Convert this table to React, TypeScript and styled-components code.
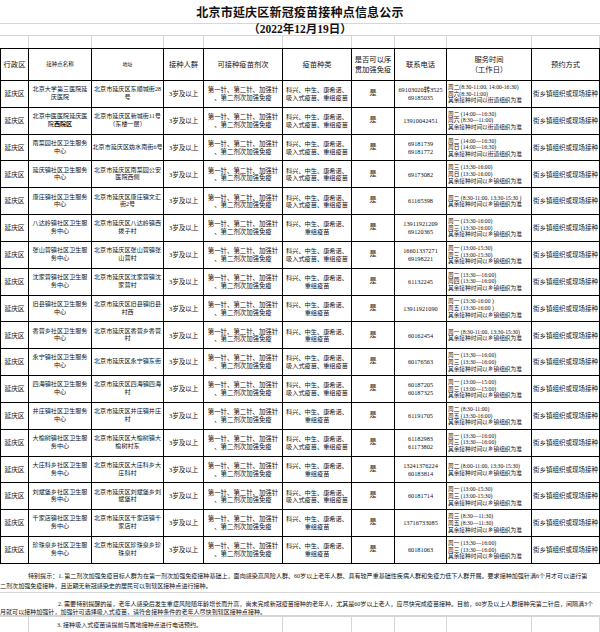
import React from "react";
import styled, { createGlobalStyle } from "styled-components";

const GlobalStyle = createGlobalStyle`
  html, body {
    margin: 0;
    padding: 0;
    background: #fff;
  }
  body {
    font-family: "Liberation Serif", "Noto Sans CJK SC", serif;
    color: #111;
  }
`;

const COLS = [29, 63, 72, 40, 79, 69, 43, 52, 85, 68];
const tableCols = COLS.map((w, i) => `${i === 0 ? w - 1 : w}px`).join(" ");
const plainCols = COLS.map((w) => `${w}px`).join(" ");

const GRID = "#d6d6d6";

const Page = styled.div`
  width: 600px;
  height: 632px;
  overflow: hidden;
  background: #fff;
`;

const TitleBar = styled.div`
  height: 23px;
  display: flex;
  align-items: center;
  justify-content: center;
  font-size: 12px;
  font-weight: 700;
  letter-spacing: 0.2px;
`;

const DateBar = styled.div`
  height: 11px;
  border-top: 1px solid ${GRID};
  display: flex;
  align-items: center;
  justify-content: center;
  font-size: 11.5px;
  font-weight: 700;
  line-height: 11px;
`;

const FaintRow = styled.div<{ $h: number }>`
  display: grid;
  grid-template-columns: ${plainCols};
  height: ${(p) => p.$h}px;
  border-top: 1px solid ${GRID};
  box-sizing: border-box;
`;

const FaintCell = styled.div<{ $span?: number; $pl?: number }>`
  border-right: 1px solid ${GRID};
  grid-column: span ${(p) => p.$span ?? 1};
  padding-left: ${(p) => p.$pl ?? 0}px;
  font-size: 6.05px;
  line-height: 10px;
  padding-top: 3px;
  white-space: nowrap;
  background: #fff;
`;

const Table = styled.div`
  display: grid;
  grid-template-columns: ${tableCols};
  grid-template-rows: 32px;
  grid-auto-rows: 26.83px;
  border-left: 1px solid #000;
  border-top: 1px solid #000;
`;

const Cell = styled.div<{ $left?: boolean; $size?: number; $lh?: number }>`
  border-right: 1px solid #000;
  border-bottom: 1px solid #000;
  display: flex;
  flex-direction: column;
  justify-content: center;
  align-items: ${(p) => (p.$left ? "flex-start" : "center")};
  text-align: ${(p) => (p.$left ? "left" : "center")};
  padding: 0 1px;
  font-size: ${(p) => p.$size ?? 6.2}px;
  line-height: ${(p) => p.$lh ?? 7.7}px;
  white-space: nowrap;
  overflow: hidden;
  min-width: 0;
`;

const Line = styled.span`
  display: block;
`;

const Strong = styled.b`
  font-weight: 700;
`;

const NoteBand = styled.div<{ $h: number; $pt: number; $lh: number }>`
  height: ${(p) => p.$h}px;
  box-sizing: border-box;
  padding-top: ${(p) => p.$pt}px;
  border-bottom: 1px solid ${GRID};
  font-size: 6.05px;
  line-height: ${(p) => p.$lh}px;
  overflow: hidden;
`;

const NoteLine = styled.div<{ $indent?: number }>`
  padding-left: ${(p) => p.$indent ?? 0}px;
  white-space: nowrap;
`;

type Row = {
  name: React.ReactNode[];
  addr: string[];
  inhaled: boolean;
  phone: string[];
  time: string[];
};

const JD = "其余接种时间以街道组织为准";
const XZ = "其余接种时间以乡镇组织为准";

const rows: Row[] = [
  {
    name: ["北京大学第三医院延", "庆医院"],
    addr: ["北京市延庆区东顺城街28", "号"],
    inhaled: true,
    phone: ["69103020转3525", "69185035"],
    time: ["周二(8:30-11:00, 14:00-16:30)", "周六(8:30-11:00)", JD],
  },
  {
    name: [
      "北京中医医院延庆医",
      <>
        院<Strong>西院区</Strong>
      </>,
    ],
    addr: ["北京市延庆区新城街11号", "（东楼一层）"],
    inhaled: true,
    phone: ["13910042451"],
    time: ["周二 (14:00—16:30)", "周六 (8:30—11:00)", JD],
  },
  {
    name: ["南菜园社区卫生服务", "中心"],
    addr: ["北京市延庆区妫水南街6号"],
    inhaled: true,
    phone: ["69181739", "69181772"],
    time: ["周二 (14:00—16:30)", "周日 (14:00—16:30)", JD],
  },
  {
    name: ["延庆镇社区卫生服务", "中心"],
    addr: ["北京市延庆区南菜园公安", "医院西侧"],
    inhaled: true,
    phone: ["69173082"],
    time: ["周三 (13:30-16:00)", "周日 (13:30-16:00)", XZ],
  },
  {
    name: ["康庄镇社区卫生服务", "中心"],
    addr: ["北京市延庆区康庄镇文汇", "街2号"],
    inhaled: true,
    phone: ["61165398"],
    time: ["周二 (8:30-11:00, 13:30-15:30 )", XZ],
  },
  {
    name: ["八达岭镇社区卫生服", "务中心"],
    addr: ["北京市延庆区八达岭镇西", "拨子村"],
    inhaled: false,
    phone: ["13911921209", "69120365"],
    time: ["周一 (13:30-16:00)", "周三 (13:30-16:00)", XZ],
  },
  {
    name: ["张山营镇社区卫生服", "务中心"],
    addr: ["北京市延庆区张山营镇张", "山营村"],
    inhaled: true,
    phone: ["16601337271", "69198221"],
    time: ["周一 (13:00-15:30)", "周三 (13:00-15:30)", XZ],
  },
  {
    name: ["沈家营镇社区卫生服", "务中心"],
    addr: ["北京市延庆区沈家营镇沈", "家营村"],
    inhaled: false,
    phone: ["61132245"],
    time: ["周二 (13:30—16:00)", "周四 (13:30—16:00)", XZ],
  },
  {
    name: ["旧县镇社区卫生服务", "中心"],
    addr: ["北京市延庆区旧县镇旧县", "村西"],
    inhaled: false,
    phone: ["13911921090"],
    time: ["周一 (13:30-16:00 )", "周五 (13:30-16:00 )", XZ],
  },
  {
    name: ["香营乡社区卫生服务", "中心"],
    addr: ["北京市延庆区香营乡香营", "村"],
    inhaled: false,
    phone: ["60162454"],
    time: ["周一 (8:30-11:00, 13:30-15:30)", XZ],
  },
  {
    name: ["永宁镇社区卫生服务", "中心"],
    addr: ["北京市延庆区永宁镇东街"],
    inhaled: true,
    phone: ["60176563"],
    time: ["周一 (13:30—16:00)", "周三 (13:30—16:00)", XZ],
  },
  {
    name: ["四海镇社区卫生服务", "中心"],
    addr: ["北京市延庆区四海镇四海", "村"],
    inhaled: true,
    phone: ["60187205", "60187325"],
    time: ["周一 (13:00—15:00)", "周三 (13:00—15:00)", XZ],
  },
  {
    name: ["井庄镇社区卫生服务", "中心"],
    addr: ["北京市延庆区井庄镇井庄", "村"],
    inhaled: false,
    phone: ["61191705"],
    time: ["周二 (8:30-11:00)", "周五 (13:30-16:00)", XZ],
  },
  {
    name: ["大榆树镇社区卫生服", "务中心"],
    addr: ["北京市延庆区大榆树镇大", "榆树村东"],
    inhaled: true,
    phone: ["61182983", "61173802"],
    time: ["周一 (13:30—16:00)", "周三 (13:30—16:00)", XZ],
  },
  {
    name: ["大庄科乡社区卫生服", "务中心"],
    addr: ["北京市延庆区大庄科乡大", "庄科村"],
    inhaled: false,
    phone: ["13241376224", "60183814"],
    time: ["周二 (8:00-11:00, 13:30-15:30)", XZ],
  },
  {
    name: ["刘斌堡乡社区卫生服", "务中心"],
    addr: ["北京市延庆区刘斌堡乡刘", "斌堡村"],
    inhaled: true,
    phone: ["60181714"],
    time: ["周一 (13:00-15:30)", "周三 (13:00-15:30)", XZ],
  },
  {
    name: ["千家店镇社区卫生服", "务中心"],
    addr: ["北京市延庆区千家店镇千", "家店村"],
    inhaled: false,
    phone: ["13716733085"],
    time: ["周三 (8:30—11:30)", "周五 (8:30—11:30)", XZ],
  },
  {
    name: ["珍珠泉乡社区卫生服", "务中心"],
    addr: ["北京市延庆区珍珠泉乡珍", "珠泉村"],
    inhaled: false,
    phone: ["60181063"],
    time: ["周一 (13:30—16:00)", "周三 (13:30—16:00)", XZ],
  },
];

const lines = (items: React.ReactNode[]) =>
  items.map((t, i) => <Line key={i}>{t}</Line>);

export default function App() {
  return (
    <Page>
      <GlobalStyle />
      <TitleBar>北京市延庆区新冠疫苗接种点信息公示</TitleBar>
      <DateBar>（2022年12月19日）</DateBar>
      <FaintRow $h={13}>
        {COLS.map((_, i) => (
          <FaintCell key={i} />
        ))}
      </FaintRow>

      <Table>
        <Cell $size={7.3}>行政区</Cell>
        <Cell $size={5.5}>接种点名称</Cell>
        <Cell $size={5}>地址</Cell>
        <Cell $size={7.3}>接种人群</Cell>
        <Cell $size={7.3}>可接种疫苗剂次</Cell>
        <Cell $size={7.3}>疫苗种类</Cell>
        <Cell $size={7.3} $lh={10}>
          {lines(["是否可以序", "贯加强免疫"])}
        </Cell>
        <Cell $size={7.3}>联系电话</Cell>
        <Cell $size={7.3} $lh={10}>
          {lines(["服务时间", "（工作日）"])}
        </Cell>
        <Cell $size={7.3}>预约方式</Cell>

        {rows.map((r, i) => (
          <React.Fragment key={i}>
            <Cell $size={6.7}>延庆区</Cell>
            <Cell $size={6.1}>{lines(r.name)}</Cell>
            <Cell $size={6.1}>{lines(r.addr)}</Cell>
            <Cell $size={6.5}>3岁及以上</Cell>
            <Cell $size={6.4}>
              {lines(["第一针、第二针、加强针", "、第二剂次加强免疫"])}
            </Cell>
            <Cell $size={6.2}>
              {lines(
                r.inhaled
                  ? ["科兴、中生、康希诺、", "吸入式疫苗、重组疫苗"]
                  : ["科兴、中生、康希诺、", "重组疫苗"]
              )}
            </Cell>
            <Cell $size={7}>是</Cell>
            <Cell $size={6.3}>{lines(r.phone)}</Cell>
            <Cell $left $size={5.7} $lh={6.7}>
              {lines(r.time)}
            </Cell>
            <Cell $left $size={6.5}>
              街乡镇组织或现场接种
            </Cell>
          </React.Fragment>
        ))}
      </Table>

      <NoteBand $h={29} $pt={7} $lh={10}>
        <NoteLine $indent={28}>
          特别提示：1. 第二剂次加强免疫目标人群为在第一剂次加强免疫接种基础上，面向感染高风险人群、60岁以上老年人群、具有较严重基础性疾病人群和免疫力低下人群开展。要求接种加强针满6个月才可以进行第
        </NoteLine>
        <NoteLine>
          二剂次加强免疫接种，且近期无新冠感染史的居民可以到辖区接种点进行接种。
        </NoteLine>
      </NoteBand>
      <NoteBand $h={23} $pt={7} $lh={8}>
        <NoteLine $indent={58}>
          2. 需要特别提醒的是，老年人感染后发生重症风险随年龄增长而升高，尚未完成新冠疫苗接种的老年人，尤其是60岁以上老人，应尽快完成疫苗接种。目前，60岁及以上人群接种完第二针后，间隔满3个
        </NoteLine>
        <NoteLine>
          月就可以接种加强针，加强针可选择吸入式疫苗，请符合接种条件的老年人尽快到辖区接种点接种。
        </NoteLine>
      </NoteBand>
      <FaintRow $h={17}>
        <FaintCell />
        <FaintCell $span={4} $pl={28}>
          3. 接种吸入式疫苗请提前与属地接种点进行电话预约。
        </FaintCell>
        {COLS.slice(5).map((_, i) => (
          <FaintCell key={i} />
        ))}
      </FaintRow>
    </Page>
  );
}
